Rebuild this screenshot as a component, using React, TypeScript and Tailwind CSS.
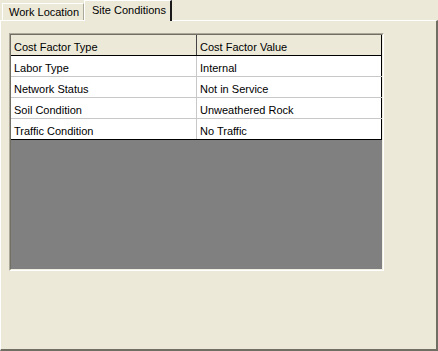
const rows = [
  { type: 'Labor Type', value: 'Internal' },
  { type: 'Network Status', value: 'Not in Service' },
  { type: 'Soil Condition', value: 'Unweathered Rock' },
  { type: 'Traffic Condition', value: 'No Traffic' },
];

export default function App() {
  return (
    <div className="w-[438px] h-[351px] bg-[#ece9d8] flex flex-col text-[11px] text-black font-['Liberation_Sans',Arial,sans-serif]">
      {/* Tab strip */}
      <div className="flex items-end h-[20px] pl-[2px]">
        <div className="h-[17px] w-[82px] pl-[6px] pt-[2px] border-t border-l border-white border-r border-r-[#aca899] leading-[13px]">
          Work Location
        </div>
        <div className="relative z-10 -mb-px h-[21px] w-[88px] pl-[7px] pt-[3px] bg-[#ece9d8] border-t border-l border-white border-r-2 border-r-[#1a1a1a] leading-[13px]">
          Site Conditions
        </div>
      </div>

      {/* Tab panel */}
      <div className="flex-1 border-t border-l border-white border-r-2 border-b-2 border-r-[#716f64] border-b-[#716f64] pt-[12px] pl-[8px]">
        <div className="w-[375px] h-[238px] border border-t-[#aca899] border-l-[#aca899] border-b-white border-r-white">
          <div className="h-full flex flex-col border border-t-[#716f64] border-l-[#716f64] border-b-[#f1efe2] border-r-[#f1efe2] bg-[#808080]">
            {/* Header */}
            <div className="flex h-[21px] bg-[#ece9d8] border-b border-black">
              <div className="w-[186px] pl-[3px] pt-[4px] border-r border-[#444]">Cost Factor Type</div>
              <div className="flex-1 pl-[3px] pt-[4px] border-r border-black">Cost Factor Value</div>
            </div>
            {/* Rows */}
            {rows.map((r, i) => (
              <div
                key={r.type}
                className={`flex h-[21px] bg-white border-b ${i === rows.length - 1 ? 'border-black' : 'border-[#c8c8c8]'}`}
              >
                <div className="w-[186px] pl-[3px] pt-[4px] border-r border-[#c8c8c8]">{r.type}</div>
                <div className="flex-1 pl-[3px] pt-[4px] border-r border-black">{r.value}</div>
              </div>
            ))}
          </div>
        </div>
      </div>
    </div>
  );
}
